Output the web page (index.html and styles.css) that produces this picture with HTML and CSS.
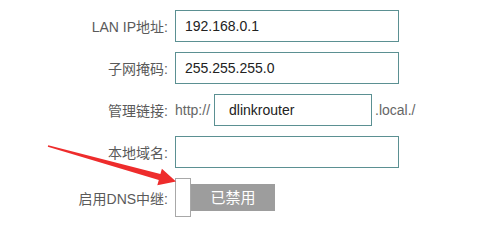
FILE: index.html
```html
<!DOCTYPE html>
<html lang="zh-CN">
<head>
<meta charset="utf-8">
<link rel="stylesheet" href="styles.css">
</head>
<body>
<div class="form">
  <div class="row">
    <label class="lbl">LAN IP地址:</label>
    <div class="field wide">192.168.0.1</div>
  </div>
  <div class="row">
    <label class="lbl">子网掩码:</label>
    <div class="field wide">255.255.255.0</div>
  </div>
  <div class="row">
    <label class="lbl">管理链接:</label>
    <span class="affix pre">http://</span>
    <div class="field mid">dlinkrouter</div>
    <span class="affix post">.local./</span>
  </div>
  <div class="row">
    <label class="lbl">本地域名:</label>
    <div class="field wide"></div>
  </div>
  <div class="row toggle-row">
    <label class="lbl">启用DNS中继:</label>
    <div class="toggle">
      <div class="knob"></div>
      <div class="state">已禁用</div>
    </div>
  </div>
</div>
<svg class="arrow" width="499" height="223" viewBox="0 0 499 223">
  <polygon points="48.2,145.3 160.4,174.1 161.9,168.8 176,181.5 157.3,185.2 158.8,179.9 47.8,146.7" fill="#ee2c2c"/>
</svg>
</body>
</html>
```

FILE: styles.css
```css
html, body {
  margin: 0;
  padding: 0;
  background: #ffffff;
  width: 499px;
  height: 223px;
  overflow: hidden;
  position: relative;
}
body {
  font-family: "Liberation Sans", "Noto Sans CJK SC", Arial, sans-serif;
  font-size: 14px;
}
.form {
  padding-top: 10px;
  display: flex;
  flex-direction: column;
  gap: 10px;
}
.row {
  display: flex;
  align-items: center;
  height: 32px;
}
.lbl {
  width: 168px;
  padding-right: 7px;
  text-align: right;
  color: #5a5a5a;
  font-size: 14px;
  flex-shrink: 0;
}
.field {
  box-sizing: border-box;
  height: 32px;
  border: 1px solid #5b9092;
  background: #fff;
  color: #222;
  font-size: 14px;
  line-height: 30px;
  padding-left: 9px;
}
.wide { width: 224px; }
.mid { width: 158px; padding-left: 14px; }
.affix {
  color: #666;
  font-size: 14px;
}
.pre { width: 39px; }
.post { margin-left: 3px; }
.toggle-row {
  height: 39px;
}
.toggle {
  display: flex;
  align-items: center;
}
.knob {
  box-sizing: border-box;
  width: 16px;
  height: 39px;
  border: 1px solid #a8a8a8;
  background: #fff;
}
.state {
  width: 84px;
  height: 27px;
  background: #9d9d9d;
  color: #ffffff;
  font-size: 15px;
  line-height: 27px;
  text-align: center;
}
.arrow {
  position: absolute;
  left: 0;
  top: 0;
  pointer-events: none;
}
```
